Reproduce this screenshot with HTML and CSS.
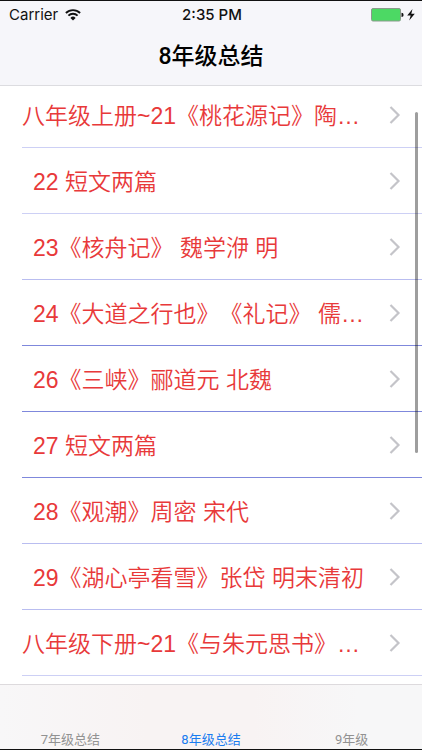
FILE: index.html
```html
<!DOCTYPE html>
<html lang="zh">
<head>
    <meta charset="UTF-8">
    <meta name="viewport" content="width=device-width, initial-scale=1.0">
    <title>8年级总结</title>
    <link rel="stylesheet" href="styles.css">
</head>
<body>
    <svg class="symbols" aria-hidden="true">
        <symbol id="chevron" viewBox="0 0 12 20">
            <path d="M1.5 2 L9.5 10 L1.5 18" fill="none" stroke="#c4c4c9" stroke-width="2.2"/>
        </symbol>
    </svg>

    <header class="header">
        <div class="status">
            <div class="carrier">
                <span>Carrier</span>
                <svg width="16" height="12" viewBox="0 0 16 12">
                    <path d="M0.9 4 A10.2 10.2 0 0 1 15.1 4" fill="none" stroke="#111" stroke-width="1.9"/>
                    <path d="M3.4 6.6 A6.6 6.6 0 0 1 12.6 6.6" fill="none" stroke="#111" stroke-width="1.9"/>
                    <path d="M5.4 8.9 A3.7 3.7 0 0 1 10.6 8.9 L8 11.6 Z" fill="#111"/>
                </svg>
            </div>
            <div class="time">2:35 PM</div>
            <div class="battery">
                <svg width="44" height="14" viewBox="0 0 44 14">
                    <rect x="0.5" y="0.5" width="29" height="12.5" rx="1.5" fill="#4cd964" stroke="#8a9a8c"/>
                    <path d="M30.5 4.8 A2 2 0 0 1 30.5 9 Z" fill="#111"/>
                    <path d="M41.5 1 L36.2 7.6 H39.7 L38.2 12.6 L43.8 5.8 H40.3 Z" fill="#111"/>
                </svg>
            </div>
        </div>
        <h1>8年级总结</h1>
    </header>

    <main class="content">
        <ul class="list">
            <li class="line-pale"><a href="#"><span class="name">八年级上册~21《桃花源记》陶…</span><svg class="arrow"><use href="#chevron"/></svg></a></li>
            <li class="line-pale"><a href="#"><span class="name sub">22 短文两篇</span><svg class="arrow"><use href="#chevron"/></svg></a></li>
            <li><a href="#"><span class="name sub">23《核舟记》 魏学洢 明</span><svg class="arrow"><use href="#chevron"/></svg></a></li>
            <li class="line-deep"><a href="#"><span class="name sub">24《大道之行也》《礼记》 儒…</span><svg class="arrow"><use href="#chevron"/></svg></a></li>
            <li class="line-deep"><a href="#"><span class="name sub">26《三峡》郦道元 北魏</span><svg class="arrow"><use href="#chevron"/></svg></a></li>
            <li class="line-deep"><a href="#"><span class="name sub">27 短文两篇</span><svg class="arrow"><use href="#chevron"/></svg></a></li>
            <li><a href="#"><span class="name sub">28《观潮》周密 宋代</span><svg class="arrow"><use href="#chevron"/></svg></a></li>
            <li><a href="#"><span class="name sub">29《湖心亭看雪》张岱 明末清初</span><svg class="arrow"><use href="#chevron"/></svg></a></li>
            <li class="line-pale"><a href="#"><span class="name">八年级下册~21《与朱元思书》…</span><svg class="arrow"><use href="#chevron"/></svg></a></li>
        </ul>
        <div class="scrollbar"></div>
    </main>

    <nav class="tabs">
        <a href="#">7年级总结</a>
        <a href="#" class="active">8年级总结</a>
        <a href="#">9年级</a>
    </nav>
</body>
</html>
```

FILE: styles.css
```css
* {
    box-sizing: border-box;
}

body {
    margin: 0;
    height: 100vh;
    display: flex;
    flex-direction: column;
    overflow: hidden;
    background-color: #fff;
    border-top: 1px solid #111;
    border-bottom: 1px solid #111;
    font-family: Roboto, "Noto Sans CJK SC", sans-serif;
    text-spacing-trim: space-all;
}

a {
    text-decoration: none;
}

.symbols {
    position: absolute;
    width: 0;
    height: 0;
}

.header {
    flex: none;
    background-color: #f6f6fa;
    border-bottom: 1px solid #dcdce0;
}

.status {
    display: grid;
    grid-template-columns: 1fr auto 1fr;
    align-items: center;
    height: 27px;
    padding: 0 7px 0 9px;
    font-family: Inter, "Noto Sans CJK SC", sans-serif;
    font-size: 15px;
    color: #111;
}

.carrier {
    display: flex;
    align-items: center;
    gap: 7px;
}

.time {
    font-weight: 500;
}

.battery {
    display: flex;
    justify-content: flex-end;
}

h1 {
    margin: 0;
    height: 57px;
    line-height: 58px;
    font-size: 23px;
    font-weight: 500;
    text-align: center;
    color: #000;
}

.content {
    flex: 1;
    min-height: 0;
    position: relative;
    overflow: hidden;
}

/* 列表从稍微滚动过的位置开始 */
.list {
    list-style: none;
    margin: -4px 0 0;
    padding: 0 0 0 22px;
}

.list li {
    border-bottom: 1px solid #b9bdf0;
}

.list .line-pale {
    border-color: #cdd0f5;
}

.list .line-deep {
    border-color: #7f88dc;
}

.list a {
    display: flex;
    align-items: center;
    justify-content: space-between;
    height: 65px;
    padding-right: 21px;
    color: #e8393a;
}

.name {
    padding-top: 2px;
    white-space: nowrap;
    font-family: "Liberation Sans", "Noto Sans CJK SC", sans-serif;
    font-size: 23px;
    font-weight: 350;
    line-height: 34px;
}

.sub {
    padding-left: 11px;
}

.arrow {
    flex: none;
    width: 12px;
    height: 20px;
}

.scrollbar {
    position: absolute;
    top: 26px;
    right: 4px;
    width: 3px;
    height: 341px;
    border-radius: 2px;
    background-color: rgba(0, 0, 0, 0.38);
}

.tabs {
    flex: none;
    display: flex;
    align-items: flex-end;
    height: 65px;
    background: linear-gradient(90deg, #f8f7f8, #f8f3f3 35%, #f8f3f3 60%, #f7f7f8 85%);
    border-top: 1px solid #dddadd;
}

.tabs a {
    flex: 1;
    font-size: 13px;
    line-height: 18px;
    text-align: center;
    color: #929292;
}

.tabs .active {
    color: #1a7cf0;
}
```
